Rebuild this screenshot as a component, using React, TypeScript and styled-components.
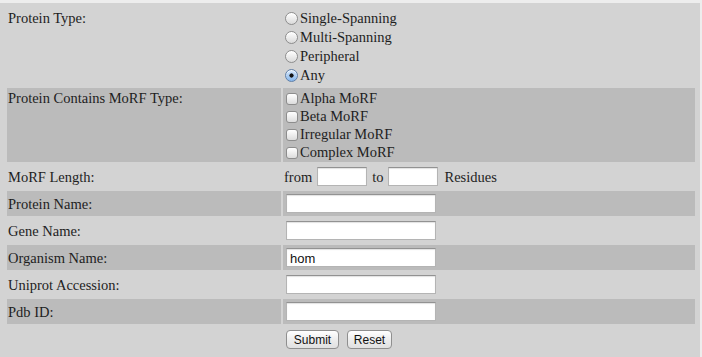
import React from "react";
import styled, { createGlobalStyle } from "styled-components";

const GlobalStyle = createGlobalStyle`
  html, body {
    margin: 0;
    padding: 0;
    background: #ededed;
  }
  body {
    font-family: "Liberation Serif", "Times New Roman", serif;
    font-size: 14.5px;
    color: #1e1e1e;
  }
`;

const Page = styled.div`
  padding-top: 3px;
`;

const Panel = styled.div`
  width: 700px;
  box-sizing: border-box;
  background: #d3d3d3;
  padding: 0 3px 0 5px;
`;

const FormTable = styled.table`
  width: 100%;
  border-collapse: separate;
  border-spacing: 2px;
`;

const Row = styled.tr<{ $shaded?: boolean }>`
  background: ${({ $shaded }) => ($shaded ? "#bbbbbb" : "transparent")};
`;

const Label = styled.td`
  width: 272px;
  padding: 1px;
  vertical-align: baseline;
`;

const Value = styled.td<{ $top?: number }>`
  padding: ${({ $top }) => $top ?? 1}px 1px 1px 1px;
  vertical-align: baseline;
`;

const Option = styled.label<{ $h: number }>`
  display: block;
  height: ${({ $h }) => $h}px;
  line-height: ${({ $h }) => $h}px;
  white-space: nowrap;
`;

const Radio = styled.input.attrs({ type: "radio", name: "ptype" })`
  appearance: none;
  box-sizing: border-box;
  width: 13px;
  height: 13px;
  margin: 0 2px 0 1px;
  border-radius: 50%;
  border: 1px solid #8d8d8d;
  background: linear-gradient(#ffffff, #dadada);
  box-shadow: inset 0 1px 1px rgba(255, 255, 255, 0.8);
  vertical-align: -2px;

  &:checked {
    border-color: #5f7fa8;
    background: radial-gradient(circle, #151515 0 1.8px, transparent 2.4px),
      linear-gradient(#d6e8fc, #86b6ec);
  }
`;

const Check = styled.input.attrs({ type: "checkbox" })`
  appearance: none;
  box-sizing: border-box;
  width: 12px;
  height: 12px;
  margin: 0 2px 0 2px;
  border-radius: 3px;
  border: 1px solid #8d8d8d;
  background: linear-gradient(#ffffff, #dcdcdc);
  vertical-align: -2px;
`;

const TextField = styled.input.attrs({ type: "text" })<{ $w: number }>`
  box-sizing: border-box;
  width: ${({ $w }) => $w}px;
  height: 19px;
  margin: 2px 0 2px 2px;
  padding: 1px 3px 0;
  border: 1px solid #b4b4b4;
  border-top-color: #929292;
  box-shadow: inset 0 1px 1px rgba(0, 0, 0, 0.12);
  background: #fff;
  font-family: "Liberation Sans", Arial, sans-serif;
  font-size: 13px;
  color: #111;
  outline: none;
`;

const Word = styled.span<{ $l?: number; $r?: number }>`
  margin-left: ${({ $l }) => $l ?? 0}px;
  margin-right: ${({ $r }) => $r ?? 0}px;
`;

const Button = styled.button<{ $w: number }>`
  box-sizing: border-box;
  width: ${({ $w }) => $w}px;
  height: 19px;
  margin: 3px 6px 5px 2px;
  padding: 0;
  border: 1px solid #8f8f8f;
  border-radius: 4px;
  background: linear-gradient(#ffffff, #ececec 55%, #e0e0e0);
  font-family: "Liberation Sans", Arial, sans-serif;
  font-size: 12px;
  color: #111;
  line-height: 16px;
`;

const radios = ["Single-Spanning", "Multi-Spanning", "Peripheral", "Any"];
const checks = ["Alpha MoRF", "Beta MoRF", "Irregular MoRF", "Complex MoRF"];
const fields = [
  { label: "Protein Name:", value: "" },
  { label: "Gene Name:", value: "" },
  { label: "Organism Name:", value: "hom" },
  { label: "Uniprot Accession:", value: "" },
  { label: "Pdb ID:", value: "" },
];

export default function App() {
  return (
    <Page>
      <GlobalStyle />
      <Panel>
        <FormTable>
          <tbody>
            <Row>
              <Label>Protein Type:</Label>
              <Value $top={4}>
                {radios.map((r) => (
                  <Option key={r} $h={19}>
                    <Radio defaultChecked={r === "Any"} />
                    {r}
                  </Option>
                ))}
              </Value>
            </Row>
            <Row $shaded>
              <Label>Protein Contains MoRF Type:</Label>
              <Value>
                {checks.map((c) => (
                  <Option key={c} $h={18}>
                    <Check />
                    {c}
                  </Option>
                ))}
              </Value>
            </Row>
            <Row>
              <Label>MoRF Length:</Label>
              <Value>
                <Word $r={3}>from</Word>
                <TextField $w={50} />
                <Word $l={5} $r={3}>to</Word>
                <TextField $w={50} />
                <Word $l={6}>Residues</Word>
              </Value>
            </Row>
            {fields.map((f, i) => (
              <Row key={f.label} $shaded={i % 2 === 0}>
                <Label>{f.label}</Label>
                <Value>
                  <TextField $w={150} defaultValue={f.value} />
                </Value>
              </Row>
            ))}
            <Row>
              <Label />
              <Value>
                <Button $w={53}>Submit</Button>
                <Button $w={45}>Reset</Button>
              </Value>
            </Row>
          </tbody>
        </FormTable>
      </Panel>
    </Page>
  );
}
